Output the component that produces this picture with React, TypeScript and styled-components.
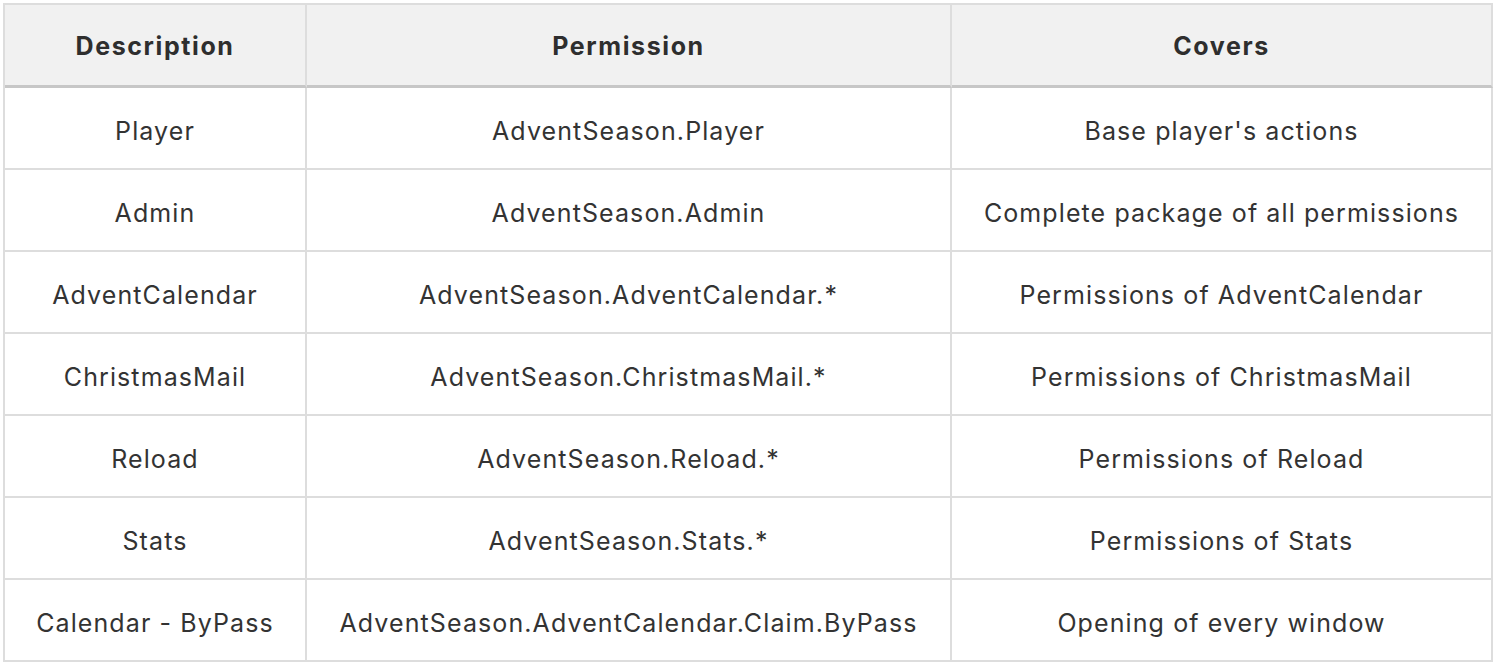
import React from "react";
import styled, { createGlobalStyle } from "styled-components";

const Global = createGlobalStyle`
  html, body { margin: 0; padding: 0; background: #ffffff; }
  body {
    font-family: Inter, "Noto Sans", "Liberation Sans", sans-serif;
    color: #333333;
    -webkit-font-smoothing: antialiased;
  }
`;

const Page = styled.div`
  padding: 3px 0 0 3px;
`;

const Table = styled.table`
  width: 1490px;
  table-layout: fixed;
  border-collapse: separate;
  border-spacing: 0;
  border-top: 2px solid #dddddd;
  border-left: 2px solid #dddddd;
  font-size: 25px;
  line-height: 30px;
`;

const HeadCell = styled.th`
  box-sizing: border-box;
  height: 83px;
  padding: 2px 8px 0;
  background: #f1f1f1;
  font-weight: 700;
  letter-spacing: 1.6px;
  text-align: center;
  white-space: nowrap;
  color: #2e2e2e;
  border-right: 2px solid #dddddd;
  border-bottom: 3px solid #c7c7c7;
`;

const Cell = styled.td`
  box-sizing: border-box;
  height: 82px;
  padding: 6px 8px 0;
  text-align: center;
  white-space: nowrap;
  letter-spacing: 1.1px;
  color: #333333;
  border-right: 2px solid #dddddd;
  border-bottom: 2px solid #dddddd;
`;

const rows: [string, string, string][] = [
  ["Player", "AdventSeason.Player", "Base player's actions"],
  ["Admin", "AdventSeason.Admin", "Complete package of all permissions"],
  ["AdventCalendar", "AdventSeason.AdventCalendar.*", "Permissions of AdventCalendar"],
  ["ChristmasMail", "AdventSeason.ChristmasMail.*", "Permissions of ChristmasMail"],
  ["Reload", "AdventSeason.Reload.*", "Permissions of Reload"],
  ["Stats", "AdventSeason.Stats.*", "Permissions of Stats"],
  ["Calendar - ByPass", "AdventSeason.AdventCalendar.Claim.ByPass", "Opening of every window"],
];

export default function App() {
  return (
    <Page>
      <Global />
      <Table>
        <colgroup>
          <col style={{ width: 302 }} />
          <col style={{ width: 645 }} />
          <col style={{ width: 541 }} />
        </colgroup>
        <thead>
          <tr>
            <HeadCell>Description</HeadCell>
            <HeadCell>Permission</HeadCell>
            <HeadCell>Covers</HeadCell>
          </tr>
        </thead>
        <tbody>
          {rows.map((r) => (
            <tr key={r[0]}>
              <Cell>{r[0]}</Cell>
              <Cell>{r[1]}</Cell>
              <Cell>{r[2]}</Cell>
            </tr>
          ))}
        </tbody>
      </Table>
    </Page>
  );
}
